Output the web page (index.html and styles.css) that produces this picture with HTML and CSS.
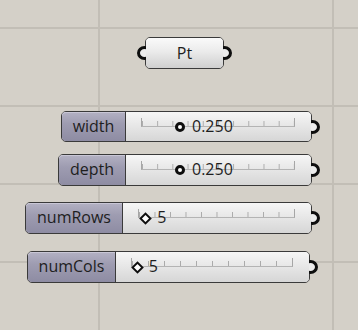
FILE: index.html
```html
<!DOCTYPE html>
<html>
<head>
<meta charset="utf-8">
<link rel="stylesheet" href="styles.css">
</head>
<body>
<div class="canvas">
  <div class="node pt">
    <span class="port in"></span>
    <div class="pt-body">Pt</div>
    <span class="port out"></span>
  </div>

  <div class="node slider s-width">
    <div class="label">width</div>
    <div class="body">
      <div class="track">
        <div class="thumb" style="left:25%"><span class="knob"></span><span class="val">0.250</span></div>
      </div>
    </div>
    <span class="port out"></span>
  </div>

  <div class="node slider s-depth">
    <div class="label">depth</div>
    <div class="body">
      <div class="track">
        <div class="thumb" style="left:25%"><span class="knob"></span><span class="val">0.250</span></div>
      </div>
    </div>
    <span class="port out"></span>
  </div>

  <div class="node slider s-rows">
    <div class="label">numRows</div>
    <div class="body">
      <div class="track">
        <div class="thumb" style="left:4%"><span class="diamond"></span><span class="val">5</span></div>
      </div>
    </div>
    <span class="port out"></span>
  </div>

  <div class="node slider s-cols">
    <div class="label">numCols</div>
    <div class="body">
      <div class="track">
        <div class="thumb" style="left:3%"><span class="diamond"></span><span class="val">5</span></div>
      </div>
    </div>
    <span class="port out"></span>
  </div>
</div>
</body>
</html>
```

FILE: styles.css
```css
html, body {
  margin: 0;
  padding: 0;
}
body {
  width: 358px;
  height: 330px;
  overflow: hidden;
  font-family: "Open Sans", "DejaVu Sans", sans-serif;
}
.canvas {
  position: relative;
  width: 358px;
  height: 330px;
  background-color: #d4d0c8;
  background-image:
    linear-gradient(to right, #c2beb6 0, #c2beb6 2px, transparent 2px),
    linear-gradient(to bottom, #c2beb6 0, #c2beb6 2px, transparent 2px);
  background-size: 234px 100%, 100% 78px;
  background-position: 98px 0, 0 27px;
}
.node {
  position: absolute;
  z-index: 1;
  display: flex;
  box-sizing: border-box;
  border: 1.5px solid #3a3a3a;
  border-radius: 5px;
  color: #1e1e1e;
  font-size: 16px;
}
.port {
  position: absolute;
  top: 50%;
  width: 9px;
  height: 8px;
  margin-top: -7px;
  border: 3px solid #0e0e0e;
  border-radius: 50%;
  background: #ececec;
  z-index: -1;
}
.port.out { right: -9px; }
.port.in { left: -9px; }

.pt {
  left: 145px;
  top: 37px;
  width: 79px;
  height: 32px;
}
.pt-body {
  flex: 1;
  display: flex;
  align-items: center;
  justify-content: center;
  border-radius: 4px;
  background: linear-gradient(#fafafa, #ebebeb 45%, #cfcfcf);
  font-size: 16px;
  padding-bottom: 1px;
}

.slider { height: 32px; }
.label {
  display: flex;
  align-items: center;
  justify-content: center;
  box-sizing: border-box;
  border-right: 1.5px solid #3a3a3a;
  border-radius: 4px 0 0 4px;
  background: linear-gradient(#b3b1c3, #9e9cb1 40%, #8e8ca3);
  box-shadow: inset 0 1px 0 #c9c7d6;
  padding-bottom: 2px;
}
.body {
  position: relative;
  flex: 1;
  border-radius: 0 4px 4px 0;
  background: linear-gradient(#f6f6f6, #e6e6e6 50%, #d6d6d6);
}
.track {
  position: absolute;
  left: 15px;
  right: 16px;
  top: 6px;
  height: 9px;
  box-sizing: border-box;
  border-left: 1px solid #a6a6a6;
  border-right: 1px solid #a6a6a6;
  border-bottom: 1px solid #b4b4b4;
  background-image: linear-gradient(to right, #ababab 0, #ababab 1px, transparent 1px);
  background-size: 10% 5px;
  background-position: 0 100%;
  background-repeat: repeat-x;
}
.thumb {
  position: absolute;
  top: 9px;
  display: flex;
  align-items: center;
  gap: 7px;
  transform: translate(-5px, -50%);
}
.knob {
  width: 4px;
  height: 4px;
  border: 3px solid #0e0e0e;
  border-radius: 50%;
  background: #fff;
  flex: none;
}
.diamond {
  width: 5px;
  height: 5px;
  border: 2.5px solid #0e0e0e;
  background: #fff;
  transform: rotate(45deg);
  flex: none;
  margin: 0 0 0 1px;
}
.val {
  font-size: 16px;
  line-height: 18px;
  color: #1e1e1e;
  padding-bottom: 2px;
}

.s-width { left: 61px; top: 111px; width: 251px; height: 31px; }
.s-width .label { width: 64px; }
.s-depth { left: 58px; top: 154px; width: 254px; }
.s-depth .label { width: 67px; }
.s-rows { left: 25px; top: 202px; width: 287px; }
.s-rows .label { width: 97px; }
.s-cols { left: 27px; top: 251px; width: 283px; }
.s-cols .label { width: 88px; }
```
